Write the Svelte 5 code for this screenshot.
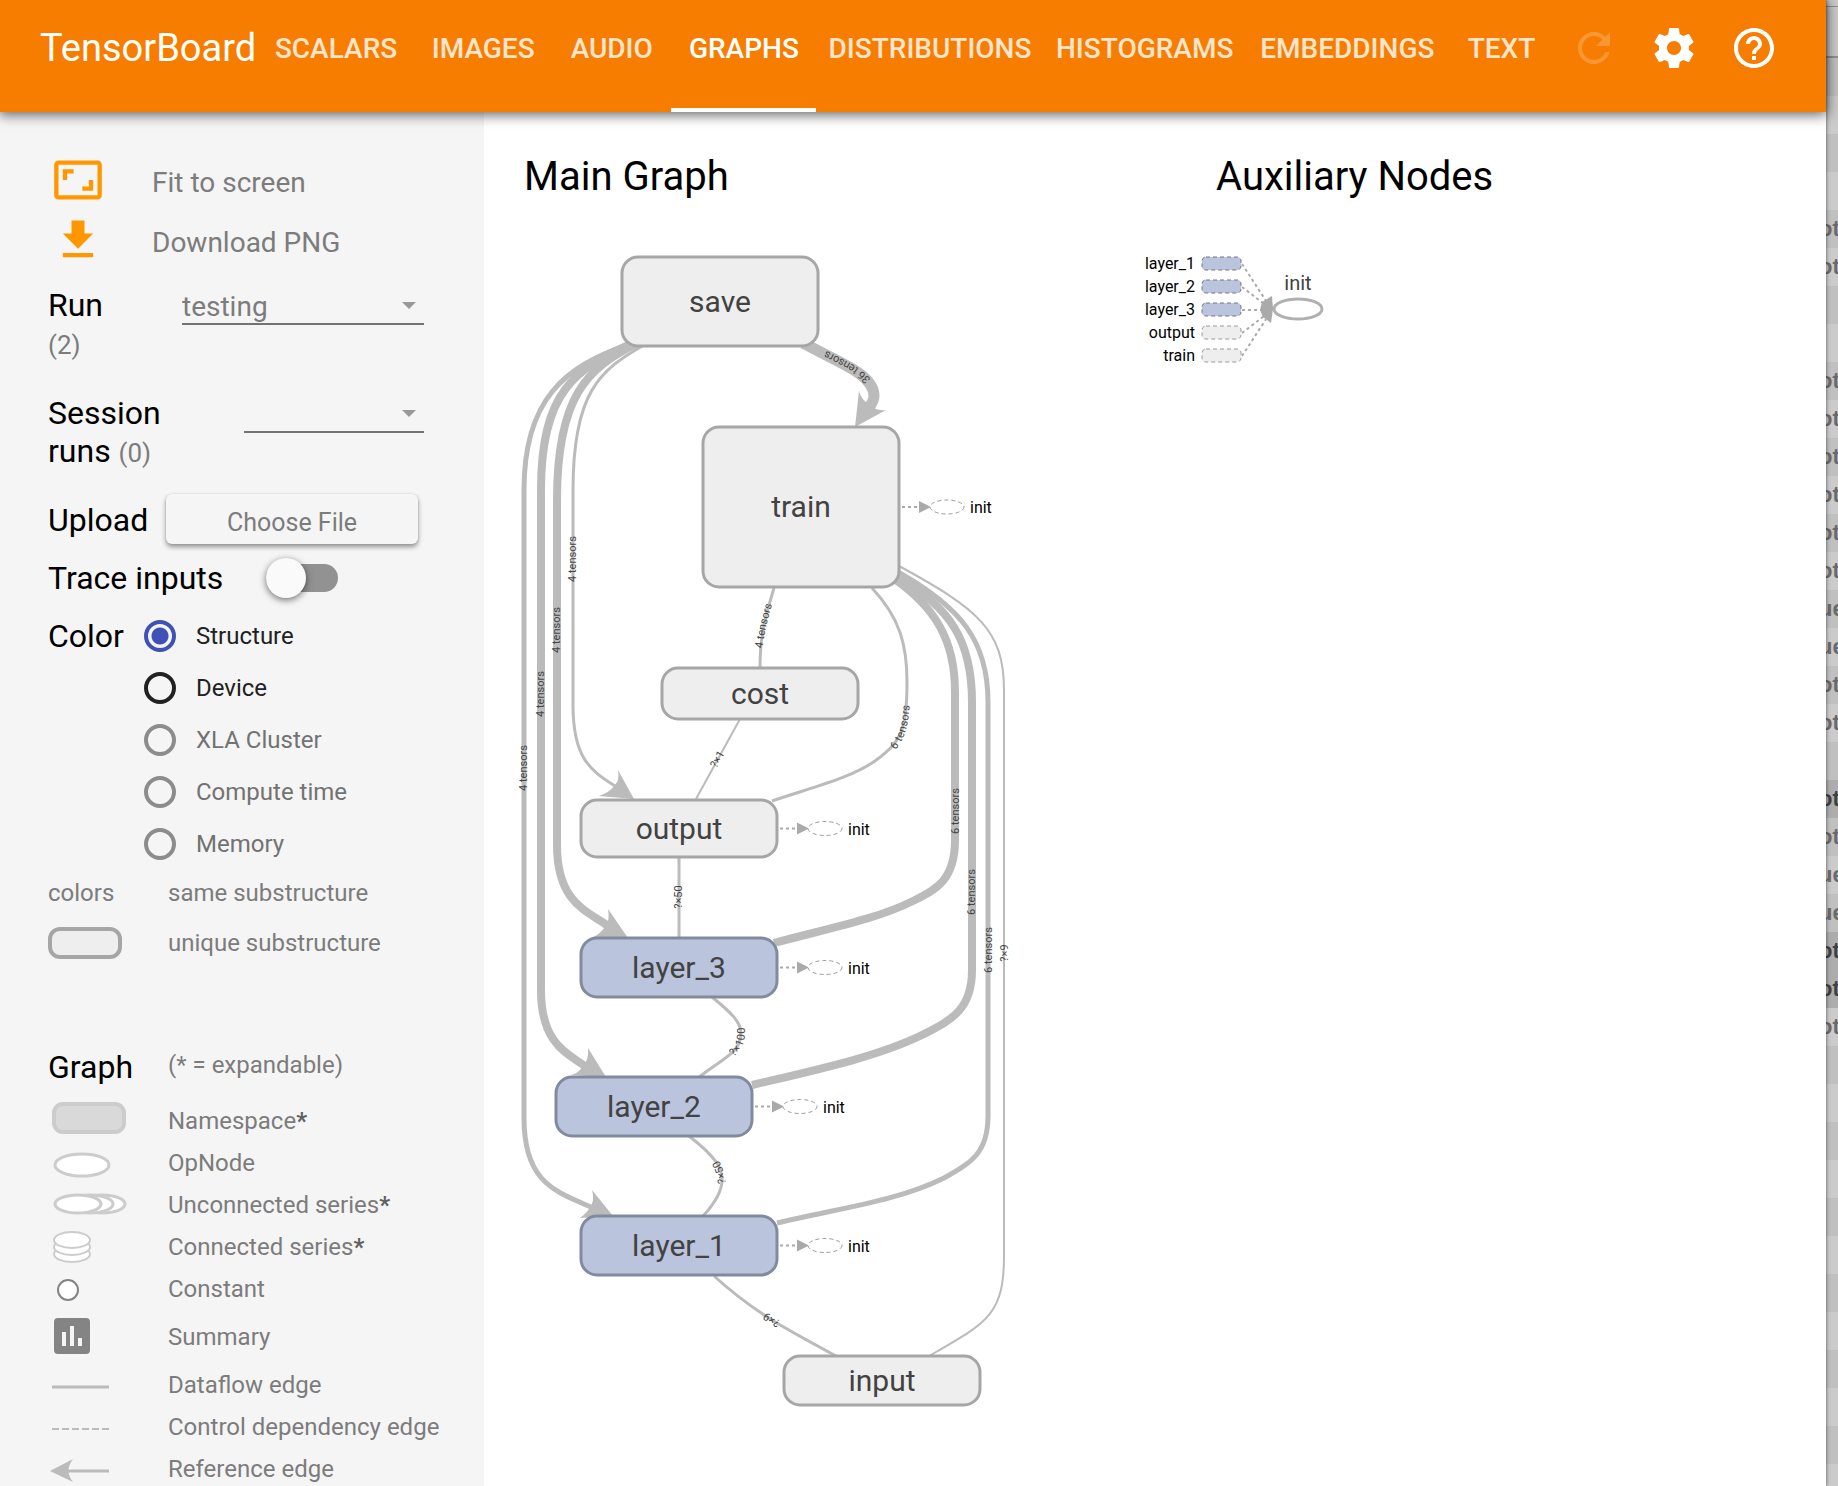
<script>
  const tabs = ['Scalars', 'Images', 'Audio', 'Graphs', 'Distributions', 'Histograms', 'Embeddings', 'Text'];
  let activeTab = $state('Graphs');

  const colorModes = [
    { id: 'structure', label: 'Structure' },
    { id: 'device', label: 'Device' },
    { id: 'xla', label: 'XLA Cluster', disabled: true },
    { id: 'compute', label: 'Compute time', disabled: true },
    { id: 'memory', label: 'Memory', disabled: true }
  ];
  let colorBy = $state('structure');
  let traceInputs = $state(false);

  const legend = [
    { kind: 'namespace', label: 'Namespace', star: true },
    { kind: 'op', label: 'OpNode' },
    { kind: 'unconnected', label: 'Unconnected series', star: true },
    { kind: 'connected', label: 'Connected series', star: true },
    { kind: 'constant', label: 'Constant' },
    { kind: 'summary', label: 'Summary' },
    { kind: 'dataflow', label: 'Dataflow edge' },
    { kind: 'control', label: 'Control dependency edge' },
    { kind: 'reference', label: 'Reference edge' }
  ];

  const nodes = [
    { name: 'save', x: 622, y: 257, h: 89 },
    { name: 'train', x: 703, y: 427, h: 160, init: true },
    { name: 'cost', x: 662, y: 668, h: 51 },
    { name: 'output', x: 581, y: 800, h: 57, init: true },
    { name: 'layer_3', x: 581, y: 938, h: 59, init: true, layer: true },
    { name: 'layer_2', x: 556, y: 1077, h: 59, init: true, layer: true },
    { name: 'layer_1', x: 581, y: 1216, h: 59, init: true, layer: true },
    { name: 'input', x: 784, y: 1356, h: 49 }
  ];
  const nodeWidth = 196;

  const edges = [
    { w: 5, d: 'M626 345 C566 367 524 398 524 490 V1118 C524 1185 558 1192 593 1208' },
    { w: 8, d: 'M630 344 C576 370 541 390 541 490 V990 C541 1048 572 1055 586 1067' },
    { w: 8, d: 'M636 344 C588 368 557 395 557 500 V845 C557 905 590 912 608 926' },
    { w: 3, d: 'M644 345 C600 370 573 392 573 490 V705 C573 758 590 770 615 786' },
    { w: 11, d: 'M803 343 L830 357 C852 368 874 379 874 396 Q874 401 868 409' },
    { w: 3, d: 'M774 588 C766 615 760 632 760 668' },
    { w: 3, d: 'M872 588 C900 618 907 645 907 682 C907 730 902 741 875 761 C850 778 820 785 772 801' },
    { w: 2, d: 'M740 719 L696 799' },
    { w: 3, d: 'M679 858 V937' },
    { w: 8, d: 'M893 578 C935 607 955 640 955 692 V840 C955 880 936 890 913 901 C877 919 830 928 774 943' },
    { w: 8, d: 'M895 575 C950 607 972 640 972 702 V970 C972 1010 951 1020 924 1034 C880 1056 820 1069 752 1085' },
    { w: 5, d: 'M898 572 C960 607 988 640 988 702 V1116 C988 1153 971 1163 944 1178 C898 1201 840 1208 777 1223' },
    { w: 2, d: 'M899 566 C978 609 1004 630 1004 690 V1255 C1004 1315 988 1322 929 1356' },
    { w: 3, d: 'M712 997 C733 1014 741 1023 741 1033 C741 1052 725 1057 699 1077' },
    { w: 3, d: 'M689 1136 C717 1158 722 1168 722 1180 C722 1189 717 1201 703 1216' },
    { w: 3, d: 'M714 1276 C754 1312 782 1327 836 1356' }
  ];

  const arrowheads = [
    'M613 1216 L592 1190 Q595 1201 590 1207 Q587 1213 580 1218 Z',
    'M606 1077 L588 1048 Q589 1060 583 1066 Q579 1073 571 1075 Z',
    'M628 938 L608 909 Q610 920 606 925 Q603 932 592 938 Z',
    'M634 799 L618 770 Q620 781 614 786 Q610 792 599 796 Z',
    'M855 427 L859 391 Q862 401 869 404 Q874 411 886 410 Z'
  ];

  const edgeLabels = [
    { text: '4 tensors', d: 'M523 808 V728' },
    { text: '4 tensors', d: 'M540 734 V654' },
    { text: '4 tensors', d: 'M556 670 V590' },
    { text: '4 tensors', d: 'M572 599 V519' },
    { text: '36 tensors', d: 'M874 399 C874 379 852 368 830 357 L808 346' },
    { text: '4 tensors', d: 'M758 662 C758 632 767 610 772 590' },
    { text: '6 tensors', d: 'M879 761 C902 741 906 728 906 686' },
    { text: '?×1', d: 'M703 784 L731 734' },
    { text: '?×50', d: 'M678 927 V867' },
    { text: '6 tensors', d: 'M955 851 V771' },
    { text: '6 tensors', d: 'M971 932 V852' },
    { text: '6 tensors', d: 'M988 990 V910' },
    { text: '?×9', d: 'M1004 983 V923' },
    { text: '?×100', d: 'M722 1062 C735 1050 741 1046 741 1033 V1016' },
    { text: '?×50', d: 'M722 1196 C722 1174 720 1168 708 1152' },
    { text: '?×9', d: 'M796 1334 L771 1320 L748 1304' }
  ];

  const auxInputs = [
    { name: 'layer_1', y: 264, layer: true },
    { name: 'layer_2', y: 287, layer: true },
    { name: 'layer_3', y: 310, layer: true },
    { name: 'output', y: 333 },
    { name: 'train', y: 356 }
  ];

  // Rows of the list window that shows past the right edge.
  const ot = { text: 'ot' };
  const ue = { text: 'ue' };
  const sel = { text: 'ot', selected: true };
  const none = { text: '' };
  const listRows = [
    none, none, none, none, ot, ot, none, none, ot, ot, ot, ot, ot, ot, ue, ue, ot, ot, none,
    sel, ot, ue, ue, sel, sel, ot, ...Array(12).fill(none)
  ];
</script>

<div class="screen">
  <div class="app">
    <header>
      <h1>TensorBoard</h1>
      <nav>
        {#each tabs as tab}
          <button class="tab" class:active={tab === activeTab} onclick={() => (activeTab = tab)}><span>{tab}</span></button>
        {/each}
      </nav>
      <button class="icon-button" aria-label="Reload" disabled>
        <svg viewBox="0 0 24 24"><path d="M17.65 6.35C16.2 4.9 14.21 4 12 4c-4.42 0-7.99 3.58-7.99 8s3.57 8 7.99 8c3.73 0 6.84-2.55 7.73-6h-2.08c-.82 2.33-3.04 4-5.65 4-3.31 0-6-2.69-6-6s2.69-6 6-6c1.66 0 3.14.69 4.22 1.78L13 11h7V4l-2.35 2.35z" /></svg>
      </button>
      <button class="icon-button" aria-label="Settings">
        <svg viewBox="0 0 24 24"><path d="M19.43 12.98c.04-.32.07-.64.07-.98s-.03-.66-.07-.98l2.11-1.65c.19-.15.24-.42.12-.64l-2-3.46c-.12-.22-.39-.3-.61-.22l-2.49 1c-.52-.4-1.08-.73-1.69-.98l-.38-2.65C14.46 2.18 14.25 2 14 2h-4c-.25 0-.46.18-.49.42l-.38 2.65c-.61.25-1.17.59-1.69.98l-2.49-1c-.23-.09-.49 0-.61.22l-2 3.46c-.13.22-.07.49.12.64l2.11 1.65c-.04.32-.07.65-.07.98s.03.66.07.98l-2.11 1.65c-.19.15-.24.42-.12.64l2 3.46c.12.22.39.3.61.22l2.49-1c.52.4 1.08.73 1.69.98l.38 2.65c.03.24.24.42.49.42h4c.25 0 .46-.18.49-.42l.38-2.65c.61-.25 1.17-.59 1.69-.98l2.49 1c.23.09.49 0 .61-.22l2-3.46c.12-.22.07-.49-.12-.64l-2.11-1.65zM12 15.5c-1.93 0-3.5-1.57-3.5-3.5s1.57-3.5 3.5-3.5 3.5 1.57 3.5 3.5-1.57 3.5-3.5 3.5z" /></svg>
      </button>
      <button class="icon-button" aria-label="Help">
        <svg viewBox="0 0 24 24"><path d="M11 18h2v-2h-2v2zm1-16C6.48 2 2 6.48 2 12s4.48 10 10 10 10-4.48 10-10S17.52 2 12 2zm0 18c-4.41 0-8-3.59-8-8s3.59-8 8-8 8 3.59 8 8-3.59 8-8 8zm0-14c-2.21 0-4 1.79-4 4h2c0-1.1.9-2 2-2s2 .9 2 2c0 2-3 1.75-3 5h2c0-2.25 3-2.5 3-5 0-2.21-1.79-4-4-4z" /></svg>
      </button>
    </header>

    <div class="body">
      <aside>
        <button class="tool">
          <svg viewBox="0 0 24 24"><path d="M19 12h-2v3h-3v2h5v-5zM7 9h3V7H5v5h2V9zm14-6H3c-1.1 0-2 .9-2 2v14c0 1.1.9 2 2 2h18c1.1 0 2-.9 2-2V5c0-1.1-.9-2-2-2zm0 16.01H3V4.99h18v14.02z" /></svg>
          <span>Fit to screen</span>
        </button>
        <button class="tool">
          <svg viewBox="0 0 24 24"><path d="M19 9h-4V3H9v6H5l7 7 7-7zM5 18v2h14v-2H5z" /></svg>
          <span>Download PNG</span>
        </button>

        <div class="picker run">
          <label for="run">Run <small>(2)</small></label>
          <div class="select">
            <select id="run"><option>testing</option></select>
            <svg viewBox="0 0 14 8"><path d="M0 0h14L7 7z" /></svg>
          </div>
        </div>
        <div class="picker session">
          <label for="session">Session runs <small>(0)</small></label>
          <div class="select">
            <select id="session"><option></option></select>
            <svg viewBox="0 0 14 8"><path d="M0 0h14L7 7z" /></svg>
          </div>
        </div>

        <div class="upload">
          <span id="upload-label">Upload</span>
          <button aria-describedby="upload-label">Choose File</button>
        </div>

        <div class="trace">
          <label for="trace">Trace inputs</label>
          <input id="trace" type="checkbox" class="toggle" bind:checked={traceInputs} />
        </div>

        <div class="color" role="radiogroup" aria-labelledby="color-label">
          <span id="color-label">Color</span>
          <div class="modes">
            {#each colorModes as mode}
              <label class:off={mode.disabled}>
                <input type="radio" name="color" value={mode.id} disabled={mode.disabled} bind:group={colorBy} />
                {mode.label}
              </label>
            {/each}
          </div>
        </div>

        <div class="substructure">
          <span>colors</span><span>same substructure</span>
          <i class="swatch"></i><span>unique substructure</span>
        </div>

        <div class="legend-title">
          <h2>Graph</h2>
          <span>(* = expandable)</span>
        </div>
        <ul class="legend">
          {#each legend as item}
            <li class={item.kind}>
              <svg viewBox="0 0 80 40">
                {#if item.kind === 'namespace'}
                  <rect class="ns" x="6" y="3" width="70" height="28" rx="9" />
                {:else if item.kind === 'op'}
                  <ellipse class="shape" cx="34" cy="22" rx="27" ry="11" />
                {:else if item.kind === 'unconnected'}
                  <ellipse class="shape" cx="54" cy="19" rx="23" ry="9" />
                  <ellipse class="shape" cx="42" cy="19" rx="23" ry="9" />
                  <ellipse class="shape" cx="30" cy="19" rx="23" ry="9" />
                {:else if item.kind === 'connected'}
                  <ellipse class="shape thin" cx="24" cy="27" rx="18" ry="8" />
                  <ellipse class="shape thin" cx="24" cy="20" rx="18" ry="8" />
                  <ellipse class="shape thin" cx="24" cy="13" rx="18" ry="8" />
                {:else if item.kind === 'constant'}
                  <circle class="dot" cx="20" cy="21" r="10" />
                {:else if item.kind === 'summary'}
                  <rect class="box" x="6" y="1" width="36" height="36" rx="4" />
                  <path class="bars" d="M14 15h4v14h-4zM22 9h4v20h-4zM30 21h4v8h-4z" />
                {:else if item.kind === 'dataflow'}
                  <path class="line" d="M4 22H61" />
                {:else if item.kind === 'control'}
                  <path class="line dashed" d="M4 22H61" />
                {:else}
                  <path class="line" d="M20 22H61" />
                  <path class="head" d="M2 22 L25 10 Q16 22 25 33 Z" />
                {/if}
              </svg>
              <span>{item.label}{#if item.star}<b>*</b>{/if}</span>
            </li>
          {/each}
        </ul>
      </aside>

      <main>
        <section class="main-graph">
          <h2>Main Graph</h2>
          <svg width="520" height="1280" viewBox="508 202 520 1280">
            {#each edges as edge}
              <path class="edge" d={edge.d} stroke-width={edge.w} />
            {/each}
            {#each arrowheads as d}
              <path class="arrow" {d} />
            {/each}
            {#each nodes as node}
              <g class:layer={node.layer}>
                <rect class="node" x={node.x} y={node.y} width={nodeWidth} height={node.h} rx="16" />
                <text class="name" x={node.x + nodeWidth / 2} y={node.y + node.h / 2 + 10}>{node.name}</text>
              </g>
              {#if node.init}
                <g transform="translate({node.x + nodeWidth} {node.y + node.h / 2})">
                  <path class="dotted" d="M3 0H20" />
                  <path class="tip" d="M20 -6 L32 0 L20 6 Z" />
                  <ellipse class="ghost" cx="48" cy="0" rx="17" ry="7" />
                  <text class="annotation" x="71" y="6">init</text>
                </g>
              {/if}
            {/each}
            {#each edgeLabels as label, i}
              <path id="label-{i}" d={label.d} fill="none" />
              <text class="edge-label"><textPath href="#label-{i}" startOffset="50%">{label.text}</textPath></text>
            {/each}
          </svg>
        </section>
        <section class="auxiliary">
          <h2>Auxiliary Nodes</h2>
          <svg width="200" height="200" viewBox="1140 202 200 200">
            {#each auxInputs as item}
              <text class="annotation end" x="1195" y={item.y + 5}>{item.name}</text>
              <rect class="source" class:layer-source={item.layer} x="1202" y={item.y - 7} width="39" height="13" rx="4" />
              <path class="dotted" d="M1242 {item.y} L{item.y === 310 ? 1262 : 1266} {310 + (item.y - 310) / 5}" />
            {/each}
            <path class="tip" d="M1273 309 L1272 296 L1262 302 L1260 310 L1263 317 L1271 323 Z" />
            <ellipse class="op-node" cx="1298" cy="309" rx="24" ry="10" />
            <text class="op-name" x="1298" y="290">init</text>
          </svg>
        </section>
      </main>
    </div>
  </div>

  <div class="behind">
    <div class="bar thin-bar"></div>
    <div class="bar"></div>
    {#each listRows as row}
      <div class="list-row" class:selected={row.selected}>{row.text}</div>
    {/each}
  </div>
</div>

<style>
  :global(body) {
    margin: 0;
    background: #fff;
    font-family: Roboto, "Liberation Sans", sans-serif;
  }
  h1, h2, ul { margin: 0; padding: 0; font-weight: 400; }
  button {
    font: inherit;
    color: inherit;
    border: 0;
    padding: 0;
    background: none;
    cursor: pointer;
  }
  .screen {
    display: flex;
    height: 100vh;
    overflow: hidden;
  }
  .app {
    flex: 1;
    min-width: 0;
    display: flex;
    flex-direction: column;
    position: relative;
    z-index: 1;
    background: #fff;
    box-shadow: 0 0 4px rgba(0, 0, 0, 0.6);
  }

  header {
    display: flex;
    box-sizing: border-box;
    height: 112px;
    padding: 0 32px 0 40px;
    background: #f77d00;
    color: #fff;
    box-shadow: 0 2px 12px 1px rgba(0, 0, 0, 0.6);
    position: relative;
    z-index: 1;
  }
  h1 {
    width: 218px;
    font-size: 38px;
    line-height: 96px;
    white-space: nowrap;
  }
  nav {
    flex: 1;
    display: grid;
    grid-template-columns: 156fr 138fr 119fr 145fr 227fr 202fr 203fr 105fr;
  }
  .tab {
    box-sizing: border-box;
    padding-bottom: 12px;
    border-bottom: 4px solid transparent;
    font-size: 28px;
    font-weight: 500;
    text-transform: uppercase;
    white-space: nowrap;
    display: flex;
    align-items: center;
    justify-content: center;
  }
  .tab span { opacity: 0.8; }
  .tab.active { border-color: #fff; }
  .tab.active span { opacity: 1; }
  .icon-button {
    width: 80px;
    height: 96px;
    display: flex;
    align-items: center;
    justify-content: center;
  }
  .icon-button svg { width: 48px; height: 48px; fill: #fff; }
  .icon-button:disabled svg { opacity: 0.2; }

  .body { flex: 1; min-height: 0; display: flex; }
  aside {
    box-sizing: border-box;
    width: 484px;
    flex: none;
    padding: 38px 60px 0 48px;
    background: #f5f5f5;
    color: #7c7c7c;
    font-size: 24px;
  }
  .tool {
    display: flex;
    align-items: center;
    gap: 48px;
    height: 60px;
    padding-left: 4px;
    font-size: 28px;
  }
  .tool svg { width: 52px; height: 52px; fill: #ff9800; }
  .tool span { padding-top: 4px; }
  .picker {
    display: flex;
    justify-content: space-between;
    height: 76px;
    font-size: 32px;
    line-height: 38px;
    color: #000;
    margin-top: 16px;
  }
  .session { margin-top: 32px; }
  .picker label { width: 70px; }
  .session label { width: 140px; }
  small { font-size: 26px; line-height: 28px; color: #7c7c7c; }
  .select {
    position: relative;
    width: 242px;
    height: 36px;
  }
  .session .select { width: 180px; }
  select {
    appearance: none;
    box-sizing: border-box;
    width: 100%;
    height: 37px;
    border: 0;
    border-bottom: 2px solid #737373;
    border-radius: 0;
    padding: 2px 0 0;
    background: none;
    color: #7c7c7c;
    font-family: inherit;
    font-size: 28px;
    line-height: 34px;
  }
  .select svg {
    position: absolute;
    right: 8px;
    top: 16px;
    width: 14px;
    height: 8px;
    fill: #999;
    pointer-events: none;
  }
  .upload {
    display: flex;
    align-items: baseline;
    justify-content: space-between;
    margin-top: 24px;
    padding-right: 6px;
    font-size: 32px;
    line-height: 38px;
    color: #000;
  }
  .upload button {
    box-sizing: border-box;
    width: 252px;
    height: 50px;
    padding-top: 8px;
    border-radius: 6px;
    background: #f5f5f5;
    color: #7c7c7c;
    font-size: 25px;
    box-shadow: 0 3px 5px rgba(0, 0, 0, 0.4), 0 0 2px rgba(0, 0, 0, 0.12);
  }
  .trace {
    display: flex;
    align-items: center;
    gap: 44px;
    height: 40px;
    margin-top: 14px;
    font-size: 32px;
    color: #000;
  }
  .trace label { width: 174px; white-space: nowrap; }
  .toggle {
    appearance: none;
    position: relative;
    width: 72px;
    height: 28px;
    margin: 0;
    border-radius: 14px;
    background: #929292;
  }
  .toggle::before {
    content: "";
    position: absolute;
    left: 0;
    top: -6px;
    width: 40px;
    height: 40px;
    border-radius: 50%;
    background: #fafafa;
    box-shadow: 0 2px 7px rgba(0, 0, 0, 0.55);
  }
  .toggle:checked::before { left: 32px; }
  .color {
    display: flex;
    gap: 16px;
    margin-top: 22px;
    color: #000;
    font-size: 32px;
    line-height: 32px;
  }
  .color > span { width: 80px; }
  .modes {
    display: flex;
    flex-direction: column;
    gap: 20px;
    font-size: 24px;
  }
  .modes label {
    display: flex;
    align-items: center;
    gap: 20px;
    color: #212121;
  }
  .modes .off { color: #727272; }
  input[type="radio"] {
    appearance: none;
    box-sizing: border-box;
    width: 32px;
    height: 32px;
    margin: 0;
    border: 4px solid #212121;
    border-radius: 50%;
  }
  input[type="radio"]:checked {
    border-color: #3f51b5;
    background: radial-gradient(circle, #3f51b5 8px, transparent 9px);
  }
  input[type="radio"]:disabled { border-color: #8c8c8c; }
  .substructure {
    display: grid;
    grid-template-columns: 120px auto;
    grid-auto-rows: 50px;
    align-items: center;
    margin-top: 8px;
    white-space: nowrap;
  }
  .swatch {
    box-sizing: border-box;
    width: 74px;
    height: 32px;
    border: 4px solid #a6a6a6;
    border-radius: 12px;
    background: #eee;
  }
  .legend-title {
    display: grid;
    grid-template-columns: 120px auto;
    align-items: center;
    height: 48px;
    margin-top: 75px;
    white-space: nowrap;
  }
  .legend-title h2 { font-size: 32px; color: #000; }
  .legend-title span { padding-bottom: 4px; }
  .legend {
    display: flex;
    flex-direction: column;
    gap: 14px;
    margin-top: 16px;
    list-style: none;
    line-height: 28px;
  }
  .legend li {
    display: flex;
    align-items: center;
    gap: 40px;
    height: 28px;
    white-space: nowrap;
  }
  .legend li.summary { height: 40px; }
  .legend svg { width: 80px; height: 40px; flex: none; }
  .legend b { color: #616161; }
  .ns { fill: #d9d9d9; stroke: #ccc; stroke-width: 4; }
  .shape { fill: #fff; stroke: #ccc; stroke-width: 3; }
  .thin { stroke-width: 2; }
  .dot { fill: #fff; stroke: #848484; stroke-width: 2; }
  .box { fill: #848484; }
  .bars { fill: #f5f5f5; }
  .line { fill: none; stroke: #bbb; stroke-width: 3; }
  .dashed { stroke-width: 2; stroke-dasharray: 7 3; }
  .head { fill: #bbb; }

  main {
    flex: 1;
    min-width: 0;
    display: grid;
    grid-template-columns: minmax(520px, 632px) 1fr;
    padding: 40px 0 0 24px;
    align-items: start;
  }
  main h2 {
    font-size: 40px;
    line-height: 50px;
    padding-left: 16px;
    white-space: nowrap;
  }
  main svg { display: block; }
  .auxiliary h2 { padding-left: 76px; }
  .edge { fill: none; stroke: #bbb; }
  .arrow { fill: #bbb; }
  .node { fill: #eee; stroke: #a6a6a6; stroke-width: 3; }
  .layer .node { fill: #bac4dc; stroke: #828b9d; }
  .name { font-size: 30px; fill: #424242; text-anchor: middle; }
  .edge-label {
    font-size: 11px;
    fill: #444;
    text-anchor: middle;
    dominant-baseline: central;
  }
  .annotation { font-size: 16px; fill: #000; }
  .end { text-anchor: end; }
  .dotted { fill: none; stroke: #aaa; stroke-width: 2; stroke-dasharray: 3 3; }
  .tip { fill: #aaa; }
  .ghost { fill: #fff; stroke: #999; stroke-width: 1; stroke-dasharray: 4 3; }
  .source { fill: #eee; stroke: #999; stroke-width: 1; stroke-dasharray: 4 3; }
  .layer-source { fill: #bac4dc; stroke: #6f7687; }
  .op-node { fill: #fff; stroke: #b0b0b0; stroke-width: 3; }
  .op-name { font-size: 20px; fill: #424242; text-anchor: middle; }

  .behind {
    width: 12px;
    flex: none;
    overflow: hidden;
    background: #cbcbcb;
  }
  .bar {
    box-sizing: border-box;
    height: 51px;
    border-bottom: 2px solid #909090;
  }
  .thin-bar { height: 7px; border-bottom-width: 1px; }
  .list-row {
    display: flex;
    align-items: center;
    height: 38px;
    font: bold 22px "Liberation Sans", sans-serif;
    color: #6a6a6a;
    text-indent: -7px;
  }
  .list-row:nth-child(odd) { background: #c0c0c0; }
  .list-row.selected { background: #adadad; color: #404040; }
</style>
